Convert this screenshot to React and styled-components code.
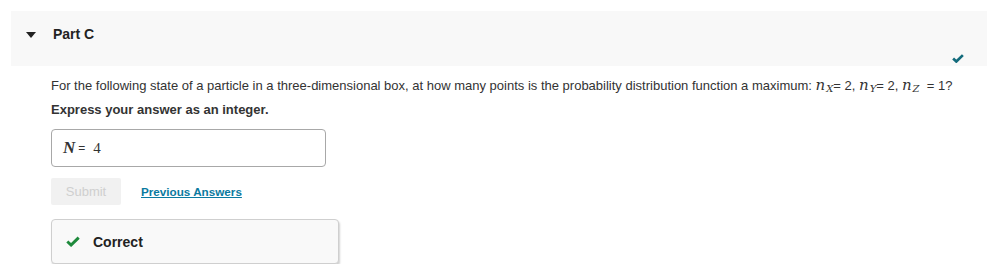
import React from "react";
import styled, { createGlobalStyle } from "styled-components";

const Global = createGlobalStyle`
  html, body { margin: 0; padding: 0; background: #fff; }
  body { font-family: "Liberation Sans", Arial, sans-serif; color: #333; }
`;

const Page = styled.div`
  padding: 11px 7px 0 11px;
`;

const Header = styled.div`
  position: relative;
  background: #f8f8f8;
  height: 55px;
  display: flex;
  align-items: flex-start;
  padding: 15px 0 0 15px;
  box-sizing: border-box;
`;

const Caret = styled.span`
  width: 0;
  height: 0;
  border-left: 5px solid transparent;
  border-right: 5px solid transparent;
  border-top: 6px solid #222;
  margin-top: 6px;
  margin-right: 17px;
`;

const PartTitle = styled.span`
  font-size: 14px;
  font-weight: bold;
  color: #222;
  line-height: 16px;
`;

const DoneCheck = styled.svg`
  position: absolute;
  right: 23px;
  bottom: 3px;
`;

const Body = styled.div`
  padding: 12px 0 0 40px;
`;

const Question = styled.p`
  margin: 0;
  font-size: 13px;
  line-height: 16px;
  color: #333;
`;

const Instr = styled.p`
  margin: 7px 0 0;
  font-size: 13px;
  line-height: 17px;
  font-weight: bold;
  color: #333;
`;

const MathVar = styled.span`
  font-family: "DejaVu Serif", "Liberation Serif", serif;
  font-style: italic;
  font-size: 15px;
  line-height: 14px;
  margin-right: 1px;
`;

const Sub = styled.sub`
  font-family: "DejaVu Serif", "Liberation Serif", serif;
  font-style: italic;
  font-size: 10px;
  line-height: 10px;
  vertical-align: -2px;
`;

const AnswerBox = styled.div`
  margin-top: 11px;
  width: 275px;
  height: 38px;
  box-sizing: border-box;
  border: 1px solid #a8a8a8;
  border-radius: 4px;
  display: flex;
  align-items: center;
  padding-left: 11px;
  font-family: "Liberation Serif", serif;
  font-size: 15px;
  color: #333;
`;

const BigN = styled.span`
  font-family: "Liberation Serif", serif;
  font-style: italic;
  font-weight: bold;
  font-size: 17px;
  color: #333;
`;

const Eq = styled.span`
  font-family: "Liberation Sans", Arial, sans-serif;
  font-size: 12px;
  margin: 0 8px 0 3px;
`;

const Actions = styled.div`
  margin-top: 11px;
  display: flex;
  align-items: center;
  gap: 20px;
`;

const SubmitBtn = styled.button`
  width: 70px;
  height: 27px;
  border: none;
  background: #f1f1f1;
  color: #cfcfcf;
  font-family: "Liberation Sans", Arial, sans-serif;
  font-size: 13px;
  border-radius: 2px;
  padding: 0;
`;

const PrevLink = styled.a`
  color: #0b7aa0;
  font-size: 11.7px;
  font-weight: bold;
  text-decoration: underline;
  cursor: pointer;
`;

const Feedback = styled.div`
  margin-top: 14px;
  width: 288px;
  height: 45px;
  box-sizing: border-box;
  border: 1px solid #cfcfcf;
  border-radius: 4px;
  background: #f9f9f9;
  box-shadow: 1px 2px 2px rgba(0, 0, 0, 0.18);
  display: flex;
  align-items: center;
  padding-left: 14px;
  gap: 13px;
`;

const FeedbackText = styled.span`
  font-size: 14px;
  font-weight: bold;
  color: #222;
`;

const Check = ({ color, w, h }) => (
  <svg width={w} height={h} viewBox="0 0 16 12">
    <path d="M1.5 6 L5.8 10 L14.5 1.5" fill="none" stroke={color} strokeWidth="3.4" />
  </svg>
);

export default function App() {
  return (
    <>
      <Global />
      <Page>
        <Header>
          <Caret />
          <PartTitle>Part C</PartTitle>
          <DoneCheck width="12" height="9" viewBox="0 0 16 12">
            <path d="M1.5 6 L5.8 10 L14.5 1.5" fill="none" stroke="#136b7c" strokeWidth="3.6" />
          </DoneCheck>
        </Header>
        <Body>
          <Question>
            For the following state of a particle in a three-dimensional box, at how many points is the probability distribution function a maximum:{" "}
            <MathVar>n</MathVar><Sub>X</Sub>= 2, <MathVar>n</MathVar><Sub>Y</Sub>= 2, <MathVar>n</MathVar><Sub>Z</Sub> &nbsp;= 1?
          </Question>
          <Instr>Express your answer as an integer.</Instr>
          <AnswerBox>
            <BigN>N</BigN>
            <Eq>=</Eq>
            <span>4</span>
          </AnswerBox>
          <Actions>
            <SubmitBtn disabled>Submit</SubmitBtn>
            <PrevLink>Previous Answers</PrevLink>
          </Actions>
          <Feedback>
            <Check color="#1e8a3c" w={14} h={11} />
            <FeedbackText>Correct</FeedbackText>
          </Feedback>
        </Body>
      </Page>
    </>
  );
}
